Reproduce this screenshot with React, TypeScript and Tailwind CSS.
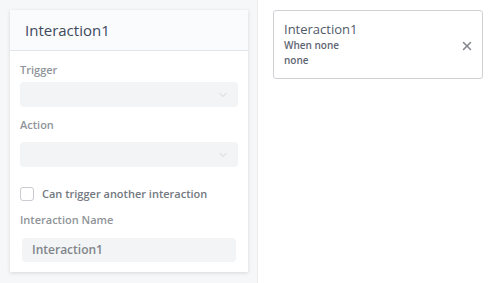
import { ChevronDown, X } from "lucide-react";

function SelectBox() {
  return (
    <div className="flex h-[25px] items-center justify-end rounded-[4px] bg-[#f3f4f5] pr-[9px]">
      <ChevronDown size={12} strokeWidth={1.5} className="text-[#c4c8cc]" />
    </div>
  );
}

export default function App() {
  return (
    <div
      className="flex h-[283px] w-[499px] overflow-hidden bg-white"
      style={{ fontFamily: '"Open Sans", "Noto Sans", sans-serif' }}
    >
      <div className="w-[258px] shrink-0 border-r border-[#ececec] bg-[#f6f7f8] px-[10px] pt-[10px]">
        <div className="w-[238px] bg-white shadow-[0_1px_4px_rgba(0,0,0,0.13)]">
          <div className="flex h-[41px] items-center border-b border-[#e2e4e7] bg-[#fafbfc] px-[15px]">
            <span className="text-[15px] text-[#3d4a5c]">Interaction1</span>
          </div>
          <div className="px-[10px] pb-[10px] pt-[10px]">
            <div className="text-[11px] font-semibold leading-[18px] text-[#8f9499]">Trigger</div>
            <div className="mt-[3px]">
              <SelectBox />
            </div>
            <div className="mt-[9px] text-[11px] font-semibold leading-[18px] text-[#8f9499]">
              Action
            </div>
            <div className="mt-[8px]">
              <SelectBox />
            </div>
            <label className="mt-[19px] flex items-center gap-[8px]">
              <span className="h-[14px] w-[14px] rounded-[3px] border border-[#c9ccd0] bg-white" />
              <span className="text-[11px] font-semibold leading-[16px] text-[#74797f]">
                Can trigger another interaction
              </span>
            </label>
            <div className="mt-[9px] text-[11px] font-semibold leading-[18px] text-[#8f9499]">
              Interaction Name
            </div>
            <div className="mx-[2px] mt-[9px] flex h-[24px] items-center rounded-[4px] bg-[#f3f4f5] px-[10px] text-[12px] font-semibold text-[#80858b]">
              Interaction1
            </div>
          </div>
        </div>
      </div>
      <div className="flex-1 pl-[15px] pt-[10px]">
        <div className="flex h-[69px] w-[210px] items-center justify-between rounded-[3px] border border-[#cfd1d4] bg-white pl-[10px] pr-[8px]">
          <div className="flex flex-col">
            <span className="text-[13px] leading-[16px] text-[#505a68]">Interaction1</span>
            <span className="mt-[1px] text-[10px] font-semibold leading-[15px] text-[#5d6572]">
              When none
            </span>
            <span className="text-[10px] font-semibold leading-[15px] text-[#5d6572]">none</span>
          </div>
          <X size={14} strokeWidth={2.5} className="mt-[2px] text-[#80848a]" />
        </div>
      </div>
    </div>
  );
}
